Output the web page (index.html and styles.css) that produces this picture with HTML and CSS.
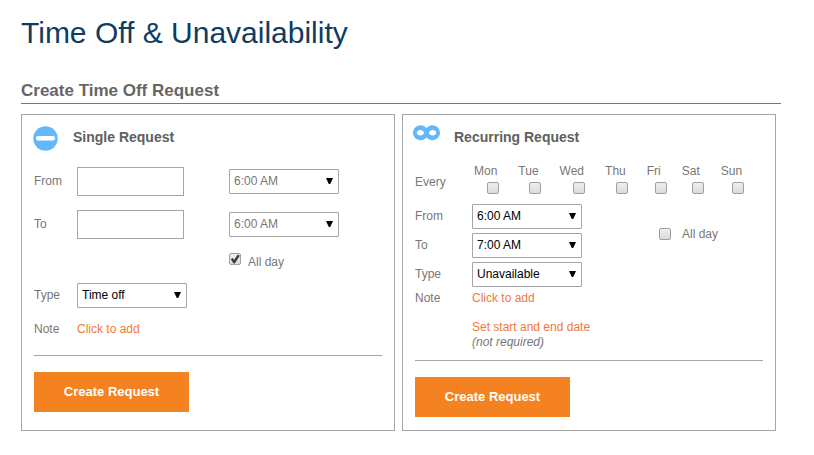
FILE: index.html
```html
<!DOCTYPE html>
<html lang="en">
<head>
  <meta charset="UTF-8" />
  <meta name="viewport" content="width=device-width, initial-scale=1.0" />
  <title>Time Off &amp; Unavailability</title>
  <link rel="stylesheet" href="styles.css">
</head>
<body>
  <h1>Time Off &amp; Unavailability</h1>
  <h2>Create Time Off Request</h2>

  <div class="panels">
    <form class="panel">
      <div class="panel-header">
        <svg class="icon" viewBox="0 0 28 25" aria-hidden="true">
          <circle cx="12.5" cy="12.5" r="12.2" fill="#62b8fb" />
          <rect x="3" y="10" width="19" height="4.500" rx="2" fill="#fff" />
        </svg>
        <h3>Single Request</h3>
      </div>

      <div class="fields single">
        <label for="fromDate">From</label>
        <input type="text" class="date" id="fromDate">
        <div class="select">
          <select aria-label="From time" disabled>
            <option>6:00 AM</option>
          </select>
        </div>

        <label for="toDate">To</label>
        <input type="text" class="date" id="toDate">
        <div class="select">
          <select aria-label="To time" disabled>
            <option>6:00 AM</option>
          </select>
        </div>

        <label class="all-day">
          <input type="checkbox" checked>
          <span>All day</span>
        </label>

        <label for="type">Type</label>
        <div class="select wide">
          <select id="type">
            <option>Time off</option>
          </select>
        </div>

        <span>Note</span>
        <a href="#" class="wide">Click to add</a>
      </div>

      <hr>
      <button type="button">Create Request</button>
    </form>

    <form class="panel">
      <div class="panel-header">
        <svg class="icon" viewBox="0 0 28 25" aria-hidden="true">
          <path fill="#62b8fb" fill-rule="evenodd" d="M12.500 2C10.500 0 9 -0.800 6.800 -0.800C2.500 -0.800 -1 2.600 -1 6.800S2.500 14.200 6.800 14.200C9 14.200 10.500 13.500 12.500 11.600C14.500 13.500 16 14.200 18.200 14.200C22.500 14.200 26 11 26 6.800S22.500 -0.800 18.200 -0.800C16 -0.800 14.500 0 12.500 2ZM2.800 6.800C2.800 5 4.400 4 6.500 4C8.300 4 9.500 5.200 10.200 6.800C9.500 8.400 8.300 9.600 6.500 9.600C4.400 9.600 2.800 8.600 2.800 6.800ZM14.800 6.800C15.500 5.200 16.700 4 18.500 4C20.600 4 22.200 5 22.200 6.800C22.200 8.600 20.600 9.600 18.500 9.600C16.700 9.600 15.500 8.400 14.800 6.800Z" />
        </svg>
        <h3>Recurring Request</h3>
      </div>

      <div class="fields recurring">
        <span>Every</span>
        <div class="days">
          <label class="day">Mon <input type="checkbox"></label>
          <label class="day">Tue <input type="checkbox"></label>
          <label class="day">Wed <input type="checkbox"></label>
          <label class="day">Thu <input type="checkbox"></label>
          <label class="day">Fri <input type="checkbox"></label>
          <label class="day">Sat <input type="checkbox"></label>
          <label class="day">Sun <input type="checkbox"></label>
        </div>

        <label for="fromTime">From</label>
        <div class="select">
          <select id="fromTime">
            <option>6:00 AM</option>
          </select>
        </div>
        <label class="all-day">
          <input type="checkbox">
          <span>All day</span>
        </label>

        <label for="toTime">To</label>
        <div class="select">
          <select id="toTime">
            <option>7:00 AM</option>
          </select>
        </div>

        <label for="recurringType">Type</label>
        <div class="select wide">
          <select id="recurringType">
            <option>Unavailable</option>
          </select>
        </div>

        <span>Note</span>
        <a href="#" class="wide">Click to add</a>

        <div class="range">
          <a href="#">Set start and end date</a>
          <em>(not required)</em>
        </div>
      </div>

      <hr>
      <button type="button">Create Request</button>
    </form>
  </div>
</body>
</html>
```

FILE: styles.css
```css
* {
  box-sizing: border-box;
}
body {
  margin: 0;
  padding: 16px 33px 24px 21px;
  background-color: #fff;
  color: #777;
  font-family: "Liberation Sans", Arial, sans-serif;
  font-size: 12px;
  line-height: 15px;
}
h1 {
  margin: 0 0 31px;
  color: #0f3c61;
  font-size: 30px;
  font-weight: normal;
  line-height: 34px;
}
h2 {
  margin: 0 0 10px;
  padding-bottom: 2px;
  border-bottom: 1px solid #777;
  color: #666;
  font-size: 17px;
  line-height: 20px;
}
h3 {
  margin: 0;
  color: #606060;
  font-size: 14px;
  line-height: 22px;
}
a {
  color: #ee7a3c;
  text-decoration: none;
}
.panels {
  display: grid;
  grid-template-columns: 1fr 1fr;
  gap: 7px;
  padding-right: 5px;
}
.panel {
  padding: 11px 12px 13px;
  border: 1px solid #a5a5a5;
}
.panel-header {
  display: flex;
  align-items: flex-start;
  gap: 12px;
  margin: 0 0 13px -1px;
}
.icon {
  width: 28px;
  height: 25px;
  overflow: visible;
}

/* form rows */
.fields {
  display: grid;
  align-items: center;
}
.single {
  grid-template-columns: 43px 152px auto;
  row-gap: 14px;
  padding-top: 3px;
  margin-bottom: 18px;
}
.recurring {
  grid-template-columns: 57px 187px auto;
  row-gap: 4px;
  margin-bottom: 10px;
}
.wide {
  grid-column: 2 / 4;
}
.date {
  width: 107px;
  height: 29px;
  padding: 4px;
  border: 1px solid #a5a5a5;
  font: inherit;
}
.select {
  position: relative;
  width: 110px;
}
.select::after {
  content: "";
  position: absolute;
  top: 9px;
  right: 6px;
  width: 7px;
  height: 6px;
  background-color: #000;
  clip-path: polygon(0 0, 100% 0, 60% 100%, 40% 100%);
  pointer-events: none;
}
select {
  display: block;
  width: 100%;
  height: 25px;
  padding: 0 4px;
  border: 1px solid #a5a5a5;
  border-radius: 1px;
  background-color: #fff;
  color: #000;
  font: inherit;
  -webkit-appearance: none;
  appearance: none;
}
select:disabled {
  color: #777;
  opacity: 1;
}

/* checkboxes */
input[type="checkbox"] {
  position: relative;
  flex: none;
  width: 12px;
  height: 12px;
  margin: 0;
  border: 1px solid #a0a0a0;
  border-radius: 2px;
  background: linear-gradient(#eee, #dcdcdc);
  -webkit-appearance: none;
  appearance: none;
}
input[type="checkbox"]:checked::after {
  content: "";
  position: absolute;
  inset: 0;
  background-color: #3c3c3c;
  clip-path: polygon(8% 52%, 26% 40%, 42% 58%, 78% 4%, 98% 18%, 48% 94%, 36% 94%);
}
.all-day {
  display: flex;
  grid-column: 3;
}
.single .all-day {
  gap: 7px;
  height: 16px;
}
.single .all-day span {
  line-height: 18px;
}
.recurring .all-day {
  grid-row: 2 / 4;
  align-items: center;
  gap: 11px;
  padding-top: 6px;
}
.days {
  display: flex;
  grid-column: 2 / 4;
  gap: 21px;
  padding-left: 2px;
  margin-bottom: 6px;
}
.day {
  display: flex;
  flex-direction: column;
  align-items: center;
  gap: 3px;
}
.day input[type="checkbox"] {
  margin: 0 -6px 0 8px;
}
.range {
  grid-column: 2 / 4;
  padding-top: 10px;
}
.range a,
.range em {
  display: block;
}

hr {
  margin: 0 0 16px;
  border: 0;
  border-top: 1px solid #a5a5a5;
}
button {
  width: 155px;
  height: 40px;
  padding: 0 0 2px;
  border: 0;
  background-color: #f58220;
  color: #fff;
  font-family: inherit;
  font-size: 13px;
  font-weight: bold;
  cursor: pointer;
}
```
